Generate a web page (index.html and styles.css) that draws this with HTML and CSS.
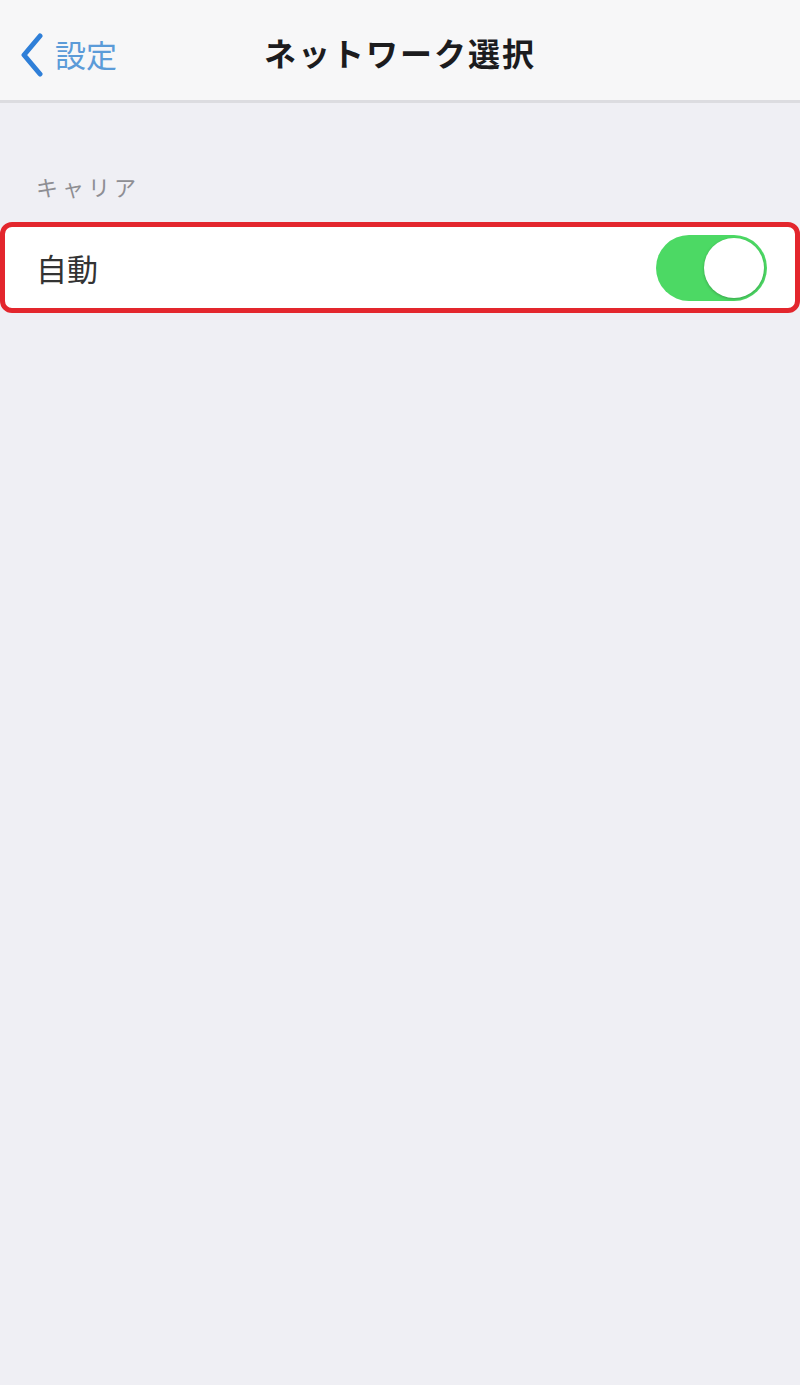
FILE: index.html
```html
<!DOCTYPE html>
<html lang="ja">
<head>
    <meta charset="UTF-8">
    <meta name="viewport" content="width=device-width, initial-scale=1.0">
    <title>ネットワーク選択</title>
    <link rel="stylesheet" href="styles.css">
</head>
<body>
    <!-- ナビゲーションバー -->
    <header class="nav-bar">
        <a class="back-link" href="#">
            <svg class="chevron" viewBox="0 0 26 44" width="26" height="44">
                <path d="M21 3 L5 22 L21 41" fill="none" stroke="#2f7fd8" stroke-width="5" stroke-linecap="round" stroke-linejoin="round"/>
            </svg>
            <span>設定</span>
        </a>
        <h1 class="nav-title">ネットワーク選択</h1>
    </header>

    <main class="content">
        <p class="section-label">キャリア</p>

        <div class="setting-row highlight">
            <span class="row-label">自動</span>
            <span class="toggle on"><span class="knob"></span></span>
        </div>
    </main>
</body>
</html>
```

FILE: styles.css
```css
body {
    margin: 0;
    font-family: "Noto Sans CJK JP", "Noto Sans", sans-serif;
    background: #efeff4;
    height: 1385px;
}

.nav-bar {
    position: relative;
    height: 100px;
    background: #f7f7f8;
    border-bottom: 3px solid #dcdce0;
    display: flex;
    align-items: center;
    justify-content: center;
}

.back-link {
    position: absolute;
    left: 19px;
    top: 33px;
    display: flex;
    align-items: center;
    gap: 10px;
    color: #5b9bd8;
    text-decoration: none;
    font-size: 31px;
}

.back-link span {
    margin-top: -4px;
}

.nav-title {
    margin: 4px 0 0;
    font-size: 32px;
    font-weight: 700;
    color: #1c1c1e;
    letter-spacing: 2px;
}

.content {
    padding-top: 67px;
}

.section-label {
    margin: 0 0 20px 36px;
    font-size: 22px;
    color: #8e8e93;
    letter-spacing: 4px;
}

.setting-row {
    height: 81px;
    background: #ffffff;
    display: flex;
    align-items: center;
    justify-content: space-between;
    padding: 0 28px 0 31px;
}

/* 赤枠で強調 */
.highlight {
    border: 5px solid #e3262d;
    border-radius: 12px;
}

.row-label {
    font-size: 31px;
    color: #333333;
}

.toggle {
    width: 111px;
    height: 66px;
    border-radius: 33px;
    background: #4cd964;
    display: flex;
    align-items: center;
    justify-content: flex-end;
    padding: 0 3px;
    box-sizing: border-box;
}

.knob {
    width: 60px;
    height: 60px;
    border-radius: 50%;
    background: #ffffff;
    box-shadow: 0 1px 3px rgba(0, 0, 0, 0.25);
}
```
